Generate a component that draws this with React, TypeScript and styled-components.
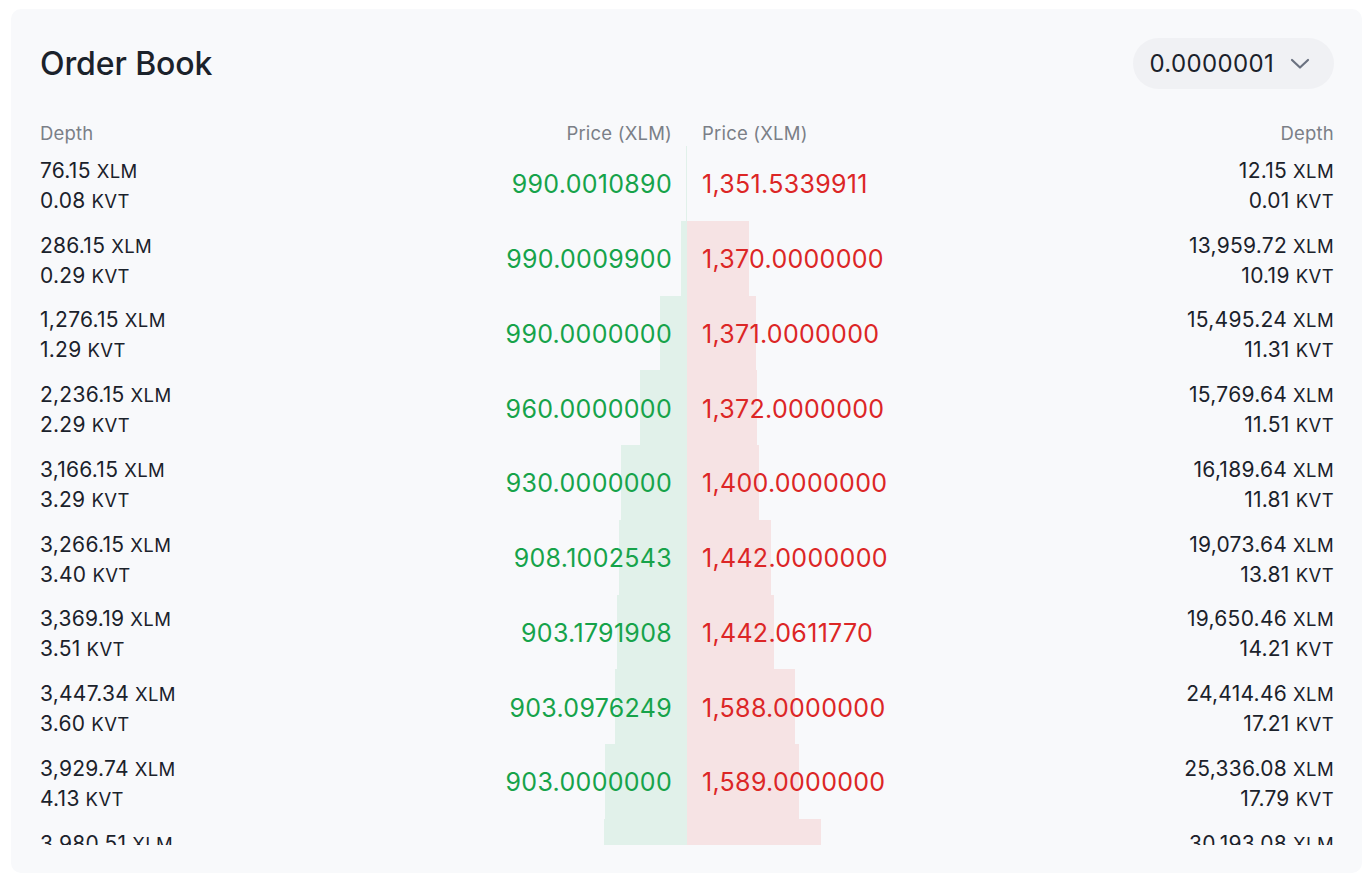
import styled, { createGlobalStyle } from "styled-components"

const GlobalStyle = createGlobalStyle`
    html, body {
        margin: 0;
        padding: 0;
        background: #ffffff;
    }
    body {
        font-family: Inter, "Noto Sans", "Liberation Sans", sans-serif;
        -webkit-font-smoothing: antialiased;
    }
`

const Page = styled.div`
    padding: 9px 10px 13px 11px;
`

const Card = styled.section`
    background: #f8f9fb;
    border-radius: 10px;
    padding: 29px 28px 28px 29px;
`

const Header = styled.header`
    display: flex;
    align-items: center;
    justify-content: space-between;
    height: 51px;
`

const Title = styled.h2`
    margin: 0;
    font-size: 32px;
    font-weight: 500;
    letter-spacing: -0.1px;
    color: #1b222b;
`

const PrecisionSelect = styled.button`
    display: flex;
    align-items: center;
    gap: 16px;
    height: 51px;
    padding: 0 24px 0 16px;
    border: none;
    border-radius: 26px;
    background: #f0f1f4;
    font-family: inherit;
    font-size: 24px;
    letter-spacing: 0.35px;
    color: #1b222b;
    cursor: pointer;
`

const Chevron = styled.svg`
    width: 20px;
    height: 12px;
`

const ColumnHeads = styled.div`
    display: grid;
    grid-template-columns: 1fr 1fr;
    margin-top: 32px;
    height: 25px;
    line-height: 25px;
    font-size: 18.5px;
    letter-spacing: 0.2px;
    color: #7b7f87;
`

const HeadHalf = styled.div<{ $side: "bid" | "ask" }>`
    display: flex;
    justify-content: space-between;
    padding: ${(p) => (p.$side === "bid" ? "0 15px 0 0" : "0 0 0 15px")};
`

const List = styled.div`
    height: 699px;
    overflow: hidden;
`

const Row = styled.div`
    display: grid;
    grid-template-columns: 1fr 1fr;
    height: 74.75px;
`

const Half = styled.div<{ $side: "bid" | "ask" }>`
    position: relative;
    display: flex;
    align-items: center;
    justify-content: space-between;
    flex-direction: ${(p) => (p.$side === "bid" ? "row" : "row-reverse")};
    padding: ${(p) => (p.$side === "bid" ? "0 15px 0 0" : "0 0 0 15px")};
`

const Bar = styled.div<{ $side: "bid" | "ask" }>`
    position: absolute;
    top: 0;
    bottom: 0;
    ${(p) => (p.$side === "bid" ? "right: 0;" : "left: 0;")}
    background: ${(p) => (p.$side === "bid" ? "#e1f1ea" : "#f6e3e4")};
`

const Depth = styled.div<{ $side: "bid" | "ask" }>`
    position: relative;
    display: flex;
    flex-direction: column;
    align-items: ${(p) => (p.$side === "bid" ? "flex-start" : "flex-end")};
    padding-top: 5px;
    font-size: 21px;
    letter-spacing: 0.25px;
    line-height: 30px;
    color: #1b222b;
`

const Unit = styled.span`
    font-size: 18.5px;
    margin-left: 6px;
    letter-spacing: 0.4px;
`

const Price = styled.div<{ $side: "bid" | "ask" }>`
    position: relative;
    padding-top: 2px;
    font-size: 25px;
    letter-spacing: 0.3px;
    color: ${(p) => (p.$side === "bid" ? "#16a34a" : "#dc2626")};
`

type Level = {
    xlm: string
    kvt: string
    price: string
    bar: number
}

const bids: Level[] = [
    { xlm: "76.15", kvt: "0.08", price: "990.0010890", bar: 1 },
    { xlm: "286.15", kvt: "0.29", price: "990.0009900", bar: 6 },
    { xlm: "1,276.15", kvt: "1.29", price: "990.0000000", bar: 27 },
    { xlm: "2,236.15", kvt: "2.29", price: "960.0000000", bar: 47 },
    { xlm: "3,166.15", kvt: "3.29", price: "930.0000000", bar: 66 },
    { xlm: "3,266.15", kvt: "3.40", price: "908.1002543", bar: 68 },
    { xlm: "3,369.19", kvt: "3.51", price: "903.1791908", bar: 70 },
    { xlm: "3,447.34", kvt: "3.60", price: "903.0976249", bar: 72 },
    { xlm: "3,929.74", kvt: "4.13", price: "903.0000000", bar: 82 },
    { xlm: "3,980.51", kvt: "4.19", price: "900.0000000", bar: 83 },
]

const asks: Level[] = [
    { xlm: "12.15", kvt: "0.01", price: "1,351.5339911", bar: 0 },
    { xlm: "13,959.72", kvt: "10.19", price: "1,370.0000000", bar: 62 },
    { xlm: "15,495.24", kvt: "11.31", price: "1,371.0000000", bar: 69 },
    { xlm: "15,769.64", kvt: "11.51", price: "1,372.0000000", bar: 70 },
    { xlm: "16,189.64", kvt: "11.81", price: "1,400.0000000", bar: 72 },
    { xlm: "19,073.64", kvt: "13.81", price: "1,442.0000000", bar: 84 },
    { xlm: "19,650.46", kvt: "14.21", price: "1,442.0611770", bar: 87 },
    { xlm: "24,414.46", kvt: "17.21", price: "1,588.0000000", bar: 108 },
    { xlm: "25,336.08", kvt: "17.79", price: "1,589.0000000", bar: 112 },
    { xlm: "30,193.08", kvt: "20.84", price: "1,600.0000000", bar: 134 },
]

function Side({ level, side }: { level: Level; side: "bid" | "ask" }) {
    return (
        <Half $side={side}>
            <Bar $side={side} style={{ width: level.bar }} />
            <Depth $side={side}>
                <span>
                    {level.xlm}
                    <Unit>XLM</Unit>
                </span>
                <span>
                    {level.kvt}
                    <Unit>KVT</Unit>
                </span>
            </Depth>
            <Price $side={side}>{level.price}</Price>
        </Half>
    )
}

function OrderBook() {
    return (
        <Card>
            <Header>
                <Title>Order Book</Title>
                <PrecisionSelect>
                    0.0000001
                    <Chevron viewBox="0 0 20 12" fill="none">
                        <path d="M2 2 L10 9.5 L18 2" stroke="#6b7280" strokeWidth="2.2" strokeLinecap="round" strokeLinejoin="round" />
                    </Chevron>
                </PrecisionSelect>
            </Header>
            <ColumnHeads>
                <HeadHalf $side="bid">
                    <span>Depth</span>
                    <span>Price (XLM)</span>
                </HeadHalf>
                <HeadHalf $side="ask">
                    <span>Price (XLM)</span>
                    <span>Depth</span>
                </HeadHalf>
            </ColumnHeads>
            <List>
                {bids.map((bid, i) => (
                    <Row key={i}>
                        <Side level={bid} side="bid" />
                        <Side level={asks[i]} side="ask" />
                    </Row>
                ))}
            </List>
        </Card>
    )
}

export default function App() {
    return (
        <>
            <GlobalStyle />
            <Page>
                <OrderBook />
            </Page>
        </>
    )
}
